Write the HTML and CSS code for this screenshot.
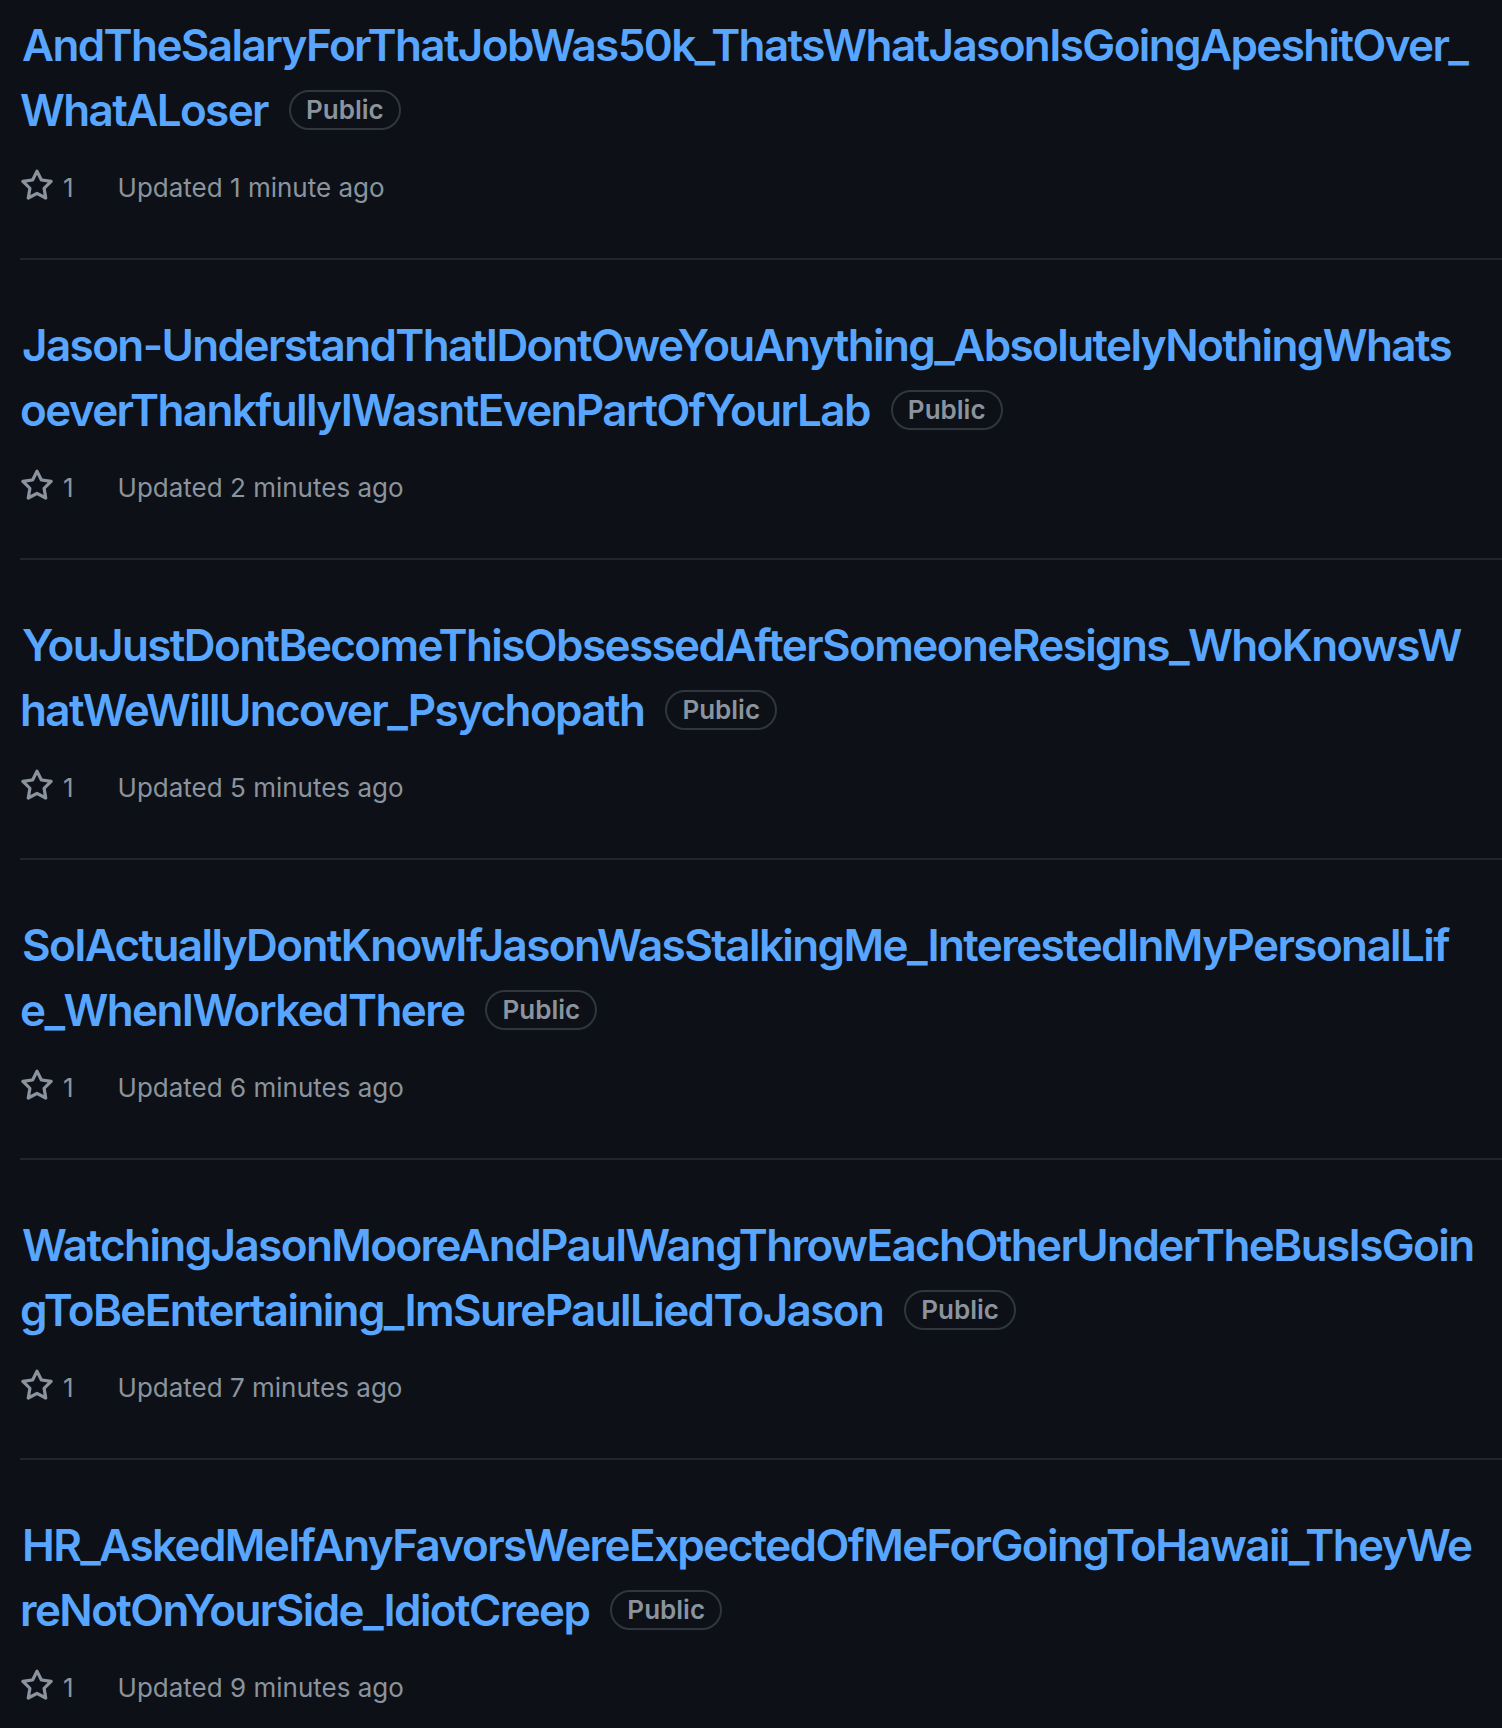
FILE: index.html
```html
<!DOCTYPE html>
<html lang="en">
<head>
<meta charset="utf-8">
<title>Repositories</title>
<link rel="stylesheet" href="styles.css">
</head>
<body>
<ul class="repo-list">
  <li class="repo">
    <h3 class="repo-title"><a class="repo-name" href="#">AndTheSalaryForThatJobWas50k_ThatsWhatJasonIsGoingApeshitOver_<br>WhatALoser</a><span class="badge">Public</span></h3>
    <div class="meta"><span class="stars"><svg class="star" viewBox="0 0 16 16" width="34" height="34"><path d="M8 .25a.75.75 0 0 1 .673.418l1.882 3.815 4.21.612a.75.75 0 0 1 .416 1.279l-3.046 2.97.719 4.192a.751.751 0 0 1-1.088.791L8 12.347l-3.766 1.98a.75.75 0 0 1-1.088-.79l.72-4.194L.818 6.374a.75.75 0 0 1 .416-1.28l4.21-.611L7.327.668A.75.75 0 0 1 8 .25Zm0 2.445L6.615 5.5a.75.75 0 0 1-.564.41l-3.097.45 2.24 2.184a.75.75 0 0 1 .216.664l-.528 3.084 2.769-1.456a.75.75 0 0 1 .698 0l2.77 1.456-.53-3.084a.75.75 0 0 1 .216-.664l2.24-2.183-3.096-.45a.75.75 0 0 1-.564-.41L8 2.694Z"/></svg>1</span><span class="updated">Updated 1 minute ago</span></div>
  </li>
  <li class="repo">
    <h3 class="repo-title"><a class="repo-name" href="#">Jason-UnderstandThatIDontOweYouAnything_AbsolutelyNothingWhats<br>oeverThankfullyIWasntEvenPartOfYourLab</a><span class="badge">Public</span></h3>
    <div class="meta"><span class="stars"><svg class="star" viewBox="0 0 16 16" width="34" height="34"><path d="M8 .25a.75.75 0 0 1 .673.418l1.882 3.815 4.21.612a.75.75 0 0 1 .416 1.279l-3.046 2.97.719 4.192a.751.751 0 0 1-1.088.791L8 12.347l-3.766 1.98a.75.75 0 0 1-1.088-.79l.72-4.194L.818 6.374a.75.75 0 0 1 .416-1.28l4.21-.611L7.327.668A.75.75 0 0 1 8 .25Zm0 2.445L6.615 5.5a.75.75 0 0 1-.564.41l-3.097.45 2.24 2.184a.75.75 0 0 1 .216.664l-.528 3.084 2.769-1.456a.75.75 0 0 1 .698 0l2.77 1.456-.53-3.084a.75.75 0 0 1 .216-.664l2.24-2.183-3.096-.45a.75.75 0 0 1-.564-.41L8 2.694Z"/></svg>1</span><span class="updated">Updated 2 minutes ago</span></div>
  </li>
  <li class="repo">
    <h3 class="repo-title"><a class="repo-name" href="#">YouJustDontBecomeThisObsessedAfterSomeoneResigns_WhoKnowsW<br>hatWeWillUncover_Psychopath</a><span class="badge">Public</span></h3>
    <div class="meta"><span class="stars"><svg class="star" viewBox="0 0 16 16" width="34" height="34"><path d="M8 .25a.75.75 0 0 1 .673.418l1.882 3.815 4.21.612a.75.75 0 0 1 .416 1.279l-3.046 2.97.719 4.192a.751.751 0 0 1-1.088.791L8 12.347l-3.766 1.98a.75.75 0 0 1-1.088-.79l.72-4.194L.818 6.374a.75.75 0 0 1 .416-1.28l4.21-.611L7.327.668A.75.75 0 0 1 8 .25Zm0 2.445L6.615 5.5a.75.75 0 0 1-.564.41l-3.097.45 2.24 2.184a.75.75 0 0 1 .216.664l-.528 3.084 2.769-1.456a.75.75 0 0 1 .698 0l2.77 1.456-.53-3.084a.75.75 0 0 1 .216-.664l2.24-2.183-3.096-.45a.75.75 0 0 1-.564-.41L8 2.694Z"/></svg>1</span><span class="updated">Updated 5 minutes ago</span></div>
  </li>
  <li class="repo">
    <h3 class="repo-title"><a class="repo-name" href="#">SoIActuallyDontKnowIfJasonWasStalkingMe_InterestedInMyPersonalLif<br>e_WhenIWorkedThere</a><span class="badge">Public</span></h3>
    <div class="meta"><span class="stars"><svg class="star" viewBox="0 0 16 16" width="34" height="34"><path d="M8 .25a.75.75 0 0 1 .673.418l1.882 3.815 4.21.612a.75.75 0 0 1 .416 1.279l-3.046 2.97.719 4.192a.751.751 0 0 1-1.088.791L8 12.347l-3.766 1.98a.75.75 0 0 1-1.088-.79l.72-4.194L.818 6.374a.75.75 0 0 1 .416-1.28l4.21-.611L7.327.668A.75.75 0 0 1 8 .25Zm0 2.445L6.615 5.5a.75.75 0 0 1-.564.41l-3.097.45 2.24 2.184a.75.75 0 0 1 .216.664l-.528 3.084 2.769-1.456a.75.75 0 0 1 .698 0l2.77 1.456-.53-3.084a.75.75 0 0 1 .216-.664l2.24-2.183-3.096-.45a.75.75 0 0 1-.564-.41L8 2.694Z"/></svg>1</span><span class="updated">Updated 6 minutes ago</span></div>
  </li>
  <li class="repo">
    <h3 class="repo-title"><a class="repo-name" href="#">WatchingJasonMooreAndPaulWangThrowEachOtherUnderTheBusIsGoin<br>gToBeEntertaining_ImSurePaulLiedToJason</a><span class="badge">Public</span></h3>
    <div class="meta"><span class="stars"><svg class="star" viewBox="0 0 16 16" width="34" height="34"><path d="M8 .25a.75.75 0 0 1 .673.418l1.882 3.815 4.21.612a.75.75 0 0 1 .416 1.279l-3.046 2.97.719 4.192a.751.751 0 0 1-1.088.791L8 12.347l-3.766 1.98a.75.75 0 0 1-1.088-.79l.72-4.194L.818 6.374a.75.75 0 0 1 .416-1.28l4.21-.611L7.327.668A.75.75 0 0 1 8 .25Zm0 2.445L6.615 5.5a.75.75 0 0 1-.564.41l-3.097.45 2.24 2.184a.75.75 0 0 1 .216.664l-.528 3.084 2.769-1.456a.75.75 0 0 1 .698 0l2.77 1.456-.53-3.084a.75.75 0 0 1 .216-.664l2.24-2.183-3.096-.45a.75.75 0 0 1-.564-.41L8 2.694Z"/></svg>1</span><span class="updated">Updated 7 minutes ago</span></div>
  </li>
  <li class="repo">
    <h3 class="repo-title"><a class="repo-name" href="#">HR_AskedMeIfAnyFavorsWereExpectedOfMeForGoingToHawaii_TheyWe<br>reNotOnYourSide_IdiotCreep</a><span class="badge">Public</span></h3>
    <div class="meta"><span class="stars"><svg class="star" viewBox="0 0 16 16" width="34" height="34"><path d="M8 .25a.75.75 0 0 1 .673.418l1.882 3.815 4.21.612a.75.75 0 0 1 .416 1.279l-3.046 2.97.719 4.192a.751.751 0 0 1-1.088.791L8 12.347l-3.766 1.98a.75.75 0 0 1-1.088-.79l.72-4.194L.818 6.374a.75.75 0 0 1 .416-1.28l4.21-.611L7.327.668A.75.75 0 0 1 8 .25Zm0 2.445L6.615 5.5a.75.75 0 0 1-.564.41l-3.097.45 2.24 2.184a.75.75 0 0 1 .216.664l-.528 3.084 2.769-1.456a.75.75 0 0 1 .698 0l2.77 1.456-.53-3.084a.75.75 0 0 1 .216-.664l2.24-2.183-3.096-.45a.75.75 0 0 1-.564-.41L8 2.694Z"/></svg>1</span><span class="updated">Updated 9 minutes ago</span></div>
  </li>
</ul>
</body>
</html>
```

FILE: styles.css
```css
html, body {
  margin: 0;
  padding: 0;
  background: #0d1117;
}

body {
  font-family: Inter, "Noto Sans", "Liberation Sans", sans-serif;
  color: #8b949e;
  overflow: hidden;
}

.repo-list {
  list-style: none;
  margin: 0 0 0 20px;
  padding: 0;
}

.repo {
  padding: 53px 0 51px;
  border-bottom: 2px solid #21262d;
}

.repo:first-child {
  padding-top: 13px;
}

.repo:last-child {
  border-bottom: none;
}

.repo-title {
  margin: 0;
  font-size: 44px;
  line-height: 65px;
  font-weight: 600;
  white-space: nowrap;
  letter-spacing: -1.6px;
}

.repo-name {
  color: #58a6ff;
  text-decoration: none;
  padding-left: 2px;
}

.badge {
  display: inline-block;
  vertical-align: 7px;
  margin-left: 21px;
  padding: 0 15px;
  height: 36px;
  line-height: 36px;
  border: 2px solid #30363d;
  border-radius: 20px;
  font-size: 26px;
  font-weight: 600;
  letter-spacing: 0;
  color: #8b949e;
}

.meta {
  display: flex;
  align-items: center;
  margin-top: 25px;
  font-size: 26px;
  line-height: 39px;
  color: #8b949e;
}

.stars {
  display: flex;
  align-items: center;
  gap: 9px;
  margin-right: 44px;
}

.star {
  fill: #8b949e;
  margin-top: -4px;
}
```
